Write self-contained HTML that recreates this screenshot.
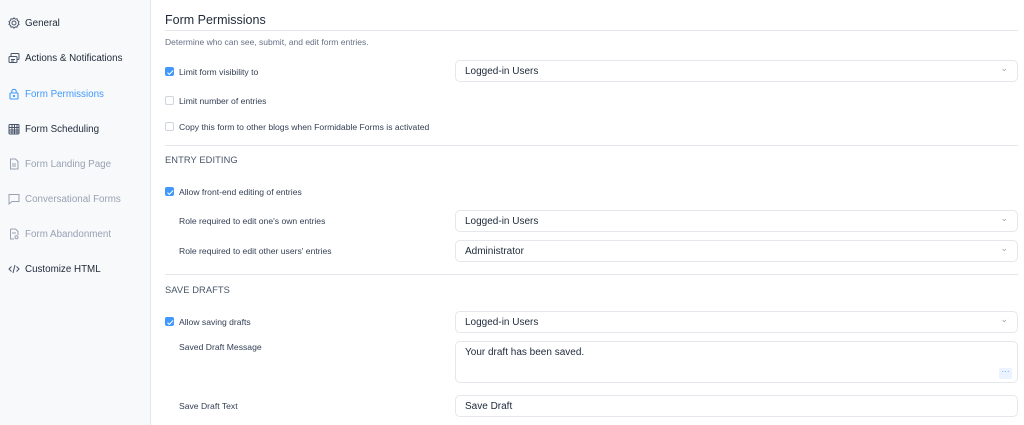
<!DOCTYPE html>
<html><head><style>
*{box-sizing:border-box;margin:0;padding:0}
body{width:1024px;height:425px;overflow:hidden;background:#fff;font-family:"Liberation Sans",sans-serif;color:#1d2939;position:relative}
.sb{position:absolute;left:0;top:0;width:151px;height:425px;background:#f8f9fb;border-right:1px solid #e5e7eb}
.si{position:absolute;left:8px;font-size:9.8px;display:flex;align-items:center;gap:5px;height:14px}
.si svg{width:12px;height:12px}
.t{position:absolute;font-size:8.6px;color:#344054;line-height:12px}
.hr{position:absolute;left:165px;width:853px;height:1px;background:#e4e7ec}
.cb{position:absolute;left:165px;width:9px;height:9px;border:1px solid #d0d5dd;border-radius:2px;background:#fff}
.cb.on{background:#4199fd;border-color:#4199fd}
.cb.on:after{content:"";position:absolute;left:2.5px;top:0.5px;width:2px;height:4.5px;border:solid #fff;border-width:0 1.2px 1.2px 0;transform:rotate(45deg)}
.sel{position:absolute;left:455px;width:563px;height:22px;border:1px solid #e4e7ec;border-radius:5px;font-size:10px;color:#1d2939;padding:5px 9px;line-height:11px}
.sel.dd:after{content:"⌄";position:absolute;right:9px;top:2px;font-size:9px;color:#98a2b3}
.h{position:absolute;left:165px;font-size:9.3px;color:#475467;letter-spacing:.1px}
</style></head><body>
<div class="sb">
<div class="si" style="top:16px;color:#1d2939"><svg viewBox="0 0 12 12" fill="none" stroke="#475467" stroke-width="1"><circle cx="6" cy="6" r="2"/><path d="M6 .8l1.2 1.3 1.8-.3.4 1.8 1.6.9-.7 1.5.7 1.5-1.6.9-.4 1.8-1.8-.3L6 11.2 4.8 9.9 3 10.2l-.4-1.8L1 7.5 1.7 6 1 4.5l1.6-.9L3 1.8l1.8.3z"/></svg>General</div>
<div class="si" style="top:51px"><svg viewBox="0 0 12 12" fill="none" stroke="#475467" stroke-width="1"><rect x="3" y="1.5" width="8" height="6" rx="1"/><rect x="1" y="4.5" width="8" height="6" rx="1" fill="#f8f9fb"/><path d="M3 7.5h4M3 9h3"/></svg>Actions &amp; Notifications</div>
<div class="si" style="top:87px;color:#4199fd"><svg viewBox="0 0 12 12" fill="none" stroke="#4199fd" stroke-width="1.1"><rect x="2" y="5" width="8" height="6" rx="1"/><path d="M3.8 5V3.5a2.2 2.2 0 014.4 0V5"/><circle cx="6" cy="8" r=".6" fill="#4199fd"/></svg>Form Permissions</div>
<div class="si" style="top:122px"><svg viewBox="0 0 12 12" fill="none" stroke="#475467" stroke-width="1"><rect x="1" y="1.5" width="10" height="9.5" rx="1"/><path d="M1 4.5h10M1 7h10M1 9h10M4 1.5v9.5M6.5 1.5v9.5M9 1.5v9.5"/></svg>Form Scheduling</div>
<div class="si" style="top:157px;color:#98a2b3"><svg viewBox="0 0 12 12" fill="none" stroke="#98a2b3" stroke-width="1"><path d="M2.5 1h5l2.5 2.5V11h-7.5z M4 6h4M4 8h4"/></svg>Form Landing Page</div>
<div class="si" style="top:192px;color:#98a2b3"><svg viewBox="0 0 12 12" fill="none" stroke="#98a2b3" stroke-width="1"><path d="M1 1.5h10v7H4l-3 2.5z"/></svg>Conversational Forms</div>
<div class="si" style="top:227px;color:#98a2b3"><svg viewBox="0 0 12 12" fill="none" stroke="#98a2b3" stroke-width="1"><path d="M2.5 1h5l2.5 2.5V7M6 11H2.5V1M4 5h4"/><circle cx="8.5" cy="9.3" r="1.5"/></svg>Form Abandonment</div>
<div class="si" style="top:262px"><svg viewBox="0 0 12 12" fill="none" stroke="#475467" stroke-width="1"><path d="M3.5 3.5L1 6l2.5 2.5M8.5 3.5L11 6 8.5 8.5M7 2L5 10"/></svg>Customize HTML</div>
</div>

<div class="t" style="left:165px;top:13px;font-size:12.5px;color:#1d2939;line-height:14px">Form Permissions</div>
<div class="hr" style="top:30px"></div>
<div class="t" style="left:165px;top:36px;font-size:8.5px;color:#667085">Determine who can see, submit, and edit form entries.</div>

<div class="cb on" style="top:67px"></div><div class="t" style="left:179px;top:66px">Limit form visibility to</div>
<div class="sel dd" style="top:60px">Logged-in Users</div>
<div class="cb" style="top:96px"></div><div class="t" style="left:179px;top:95px">Limit number of entries</div>
<div class="cb" style="top:122px"></div><div class="t" style="left:179px;top:121px">Copy this form to other blogs when Formidable Forms is activated</div>
<div class="hr" style="top:145px"></div>

<div class="h" style="top:155px">ENTRY EDITING</div>
<div class="cb on" style="top:187px"></div><div class="t" style="left:179px;top:186px">Allow front-end editing of entries</div>
<div class="t" style="left:179px;top:215px">Role required to edit one's own entries</div>
<div class="sel dd" style="top:210px">Logged-in Users</div>
<div class="t" style="left:179px;top:245px">Role required to edit other users' entries</div>
<div class="sel dd" style="top:240px">Administrator</div>
<div class="hr" style="top:274px"></div>

<div class="h" style="top:285px">SAVE DRAFTS</div>
<div class="cb on" style="top:317px"></div><div class="t" style="left:179px;top:316px">Allow saving drafts</div>
<div class="sel dd" style="top:311px">Logged-in Users</div>
<div class="t" style="left:179px;top:341px">Saved Draft Message</div>
<div class="sel" style="top:341px;height:42px">Your draft has been saved.<div style="position:absolute;right:5px;bottom:3px;width:13px;height:11px;background:#eaf3ff;border-radius:2px;color:#4199fd;font-size:8px;text-align:center;line-height:7px">···</div></div>
<div class="t" style="left:179px;top:400px">Save Draft Text</div>
<div class="sel" style="top:395px">Save Draft</div>
</body></html>
